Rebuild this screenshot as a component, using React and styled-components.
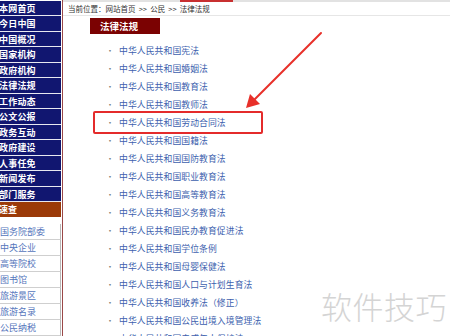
import React from 'react'
import styled, { createGlobalStyle } from 'styled-components'

const GlobalStyle = createGlobalStyle`
    html, body {
        margin: 0;
        padding: 0;
        background: #ffffff;
        overflow: hidden;
    }
    body {
        font-family: "Noto Sans CJK SC", "Noto Sans", sans-serif;
    }
`;

const Page = styled.div`
    position: relative;
    width: 450px;
    height: 336px;
    overflow: hidden;
    display: flex;
    flex-direction: row;
    background: #ffffff;
`;

const Sidebar = styled.div`
    width: 61px;
    flex-shrink: 0;
    padding-top: 1px;
    display: flex;
    flex-direction: column;
`;

const NavItem = styled.div`
    height: 15px;
    line-height: 15px;
    background: #111670;
    border-bottom: 1px solid #e8e8f0;
    color: #ffffff;
    font-size: 9px;
    font-weight: 700;
    white-space: nowrap;
    overflow: hidden;
    text-indent: -1px;
    letter-spacing: 0.2px;
`;

const QuickBand = styled.div`
    height: 15px;
    line-height: 15px;
    background: #9b3a08;
    color: #ffffff;
    font-size: 9px;
    font-weight: 700;
    text-indent: -1px;
`;

const QuickList = styled.div`
    padding-top: 7px;
    display: flex;
    flex-direction: column;
`;

const QuickItem = styled.div`
    height: 15px;
    line-height: 15px;
    border-bottom: 1px solid #cfcfcf;
    border-right: 1px solid #b8b8b8;
    color: #5676bc;
    font-size: 9px;
    white-space: nowrap;
    overflow: hidden;
`;

const Main = styled.div`
    flex: 1;
    margin-left: 1px;
    border-left: 1px solid #9a4848;
    display: flex;
    flex-direction: column;
`;

const TopStrip = styled.div`
    height: 3px;
    background: #e2e2e2;
    display: flex;
`;

const TabMark = styled.div`
    margin-left: 117px;
    width: 53px;
    height: 2px;
    background: #c83030;
`;

const Breadcrumb = styled.div`
    height: 13px;
    line-height: 13px;
    padding-left: 5px;
    border-bottom: 1px solid #e6e6e6;
    color: #333333;
    font-size: 7.5px;
    white-space: nowrap;
    word-spacing: 1.5px;
`;

const Content = styled.div`
    padding: 2px 0 0 27px;
    display: flex;
    flex-direction: column;
`;

const TitleBox = styled.div`
    width: 60px;
    height: 16px;
    line-height: 16px;
    padding-left: 10px;
    background: #7b0202;
    color: #ffffff;
    font-size: 9.5px;
    font-weight: 700;
`;

const LawList = styled.ul`
    list-style: none;
    margin: 8px 0 0 0;
    padding: 0;
`;

const LawRow = styled.li`
    height: 18px;
    line-height: 18px;
    display: flex;
    align-items: center;
    font-size: 8.8px;
    white-space: nowrap;
`;

const Dot = styled.span`
    width: 29px;
    padding-left: 16px;
    box-sizing: border-box;
    color: #777777;
    font-size: 8px;
`;

const LawLink = styled.a`
    color: #3d5fae;
    text-decoration: none;
    letter-spacing: 0.1px;
`;

const Highlight = styled.div`
    position: absolute;
    left: 93px;
    top: 111px;
    width: 166px;
    height: 19px;
    border: 2px solid #e42b2b;
    border-radius: 2px;
`;

const ArrowLayer = styled.svg`
    position: absolute;
    left: 0;
    top: 0;
    width: 450px;
    height: 336px;
    pointer-events: none;
`;

const Watermark = styled.div`
    position: absolute;
    left: 321px;
    top: 283px;
    font-size: 31px;
    font-weight: 300;
    color: #d4d4d4;
    letter-spacing: 0.5px;
    white-space: nowrap;
`;

const navItems = [
    '本网首页', '今日中国', '中国概况', '国家机构', '政府机构', '法律法规', '工作动态',
    '公文公报', '政务互动', '政府建设', '人事任免', '新闻发布', '部门服务',
];

const quickItems = ['国务院部委', '中央企业', '高等院校', '图书馆', '旅游景区', '旅游名录', '公民纳税'];

const laws = [
    '宪法', '婚姻法', '教育法', '教师法', '劳动合同法', '国籍法', '国防教育法', '职业教育法',
    '高等教育法', '义务教育法', '民办教育促进法', '学位条例', '母婴保健法', '人口与计划生育法',
    '收养法（修正）', '公民出境入境管理法', '未成年人保护法',
];

const App = () => {
    return (
        <Page>
            <GlobalStyle />
            <Sidebar>
                {navItems.map((item) => (
                    <NavItem key={item}>{item}</NavItem>
                ))}
                <QuickBand>速查</QuickBand>
                <QuickList>
                    {quickItems.map((item) => (
                        <QuickItem key={item}>{item}</QuickItem>
                    ))}
                </QuickList>
            </Sidebar>
            <Main>
                <TopStrip>
                    <TabMark />
                </TopStrip>
                <Breadcrumb>当前位置：网站首页 &gt;&gt; 公民 &gt;&gt; 法律法规</Breadcrumb>
                <Content>
                    <TitleBox>法律法规</TitleBox>
                    <LawList>
                        {laws.map((law) => (
                            <LawRow key={law}>
                                <Dot>·</Dot>
                                <LawLink href="#">中华人民共和国{law}</LawLink>
                            </LawRow>
                        ))}
                    </LawList>
                </Content>
            </Main>
            <Highlight />
            <ArrowLayer viewBox="0 0 450 336">
                <line x1="321" y1="33" x2="254" y2="100" stroke="#e8302a" strokeWidth="2" strokeLinecap="round" />
                <polygon points="246,108 250,94 260,104" fill="#e8302a" />
            </ArrowLayer>
            <Watermark>软件技巧</Watermark>
        </Page>
    )
}

export default App
